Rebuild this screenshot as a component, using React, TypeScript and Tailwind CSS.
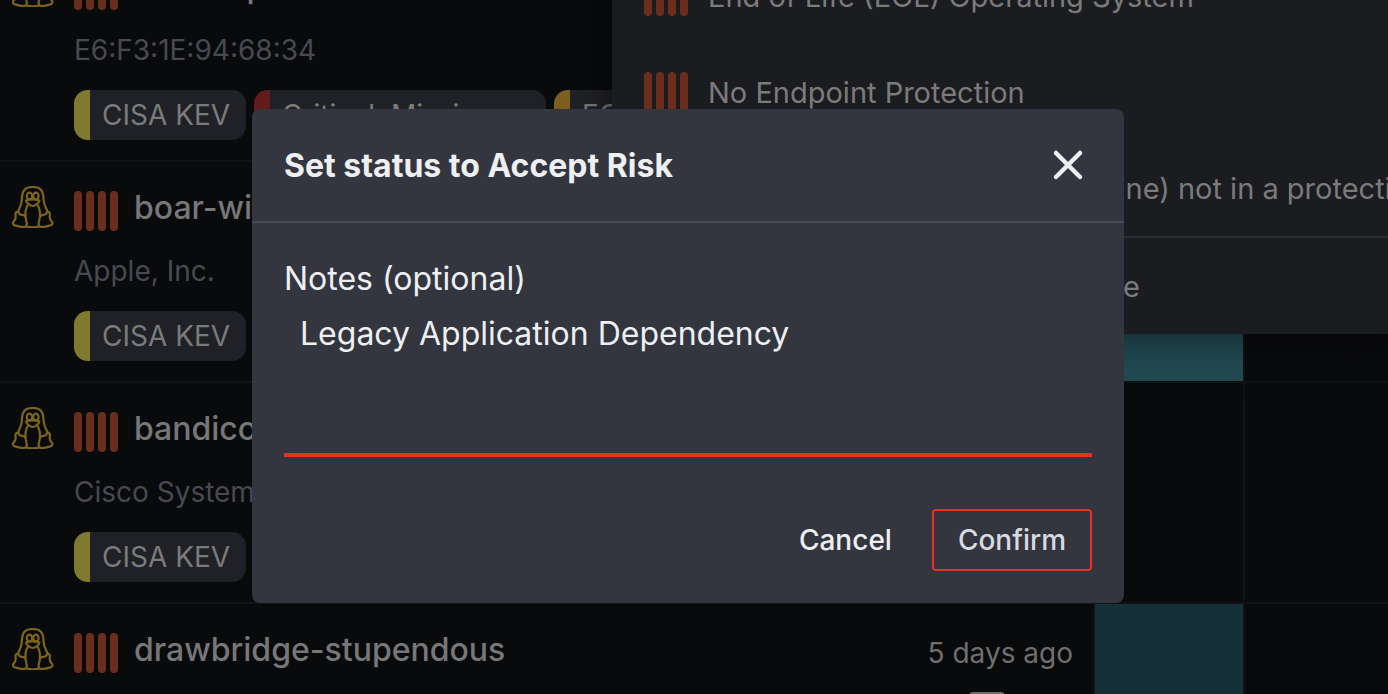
import React, { useState } from 'react';
import { X } from 'lucide-react';

type Tag = { label: string; color: string; width?: string };

type Asset = {
  name: string;
  detail: string;
  lastSeen: string;
  tags: Tag[];
  heat: string;
};

const kev: Tag = { label: 'CISA KEV', color: 'bg-[#817930]' };

const assets: Asset[] = [
  {
    name: 'tenrec-patient',
    detail: 'E6:F3:1E:94:68:34',
    lastSeen: '2 days ago',
    tags: [
      kev,
      { label: 'Critical, Missing ...', color: 'bg-[#641b1b]', width: 'w-[292px]' },
      { label: 'EOL', color: 'bg-[#7d5f20]' },
    ],
    heat: '',
  },
  { name: 'boar-winning', detail: 'Apple, Inc.', lastSeen: '3 days ago', tags: [kev], heat: 'bg-[#224a52]' },
  { name: 'bandicoot-bold', detail: 'Cisco Systems', lastSeen: '4 days ago', tags: [kev], heat: '' },
  { name: 'drawbridge-stupendous', detail: 'Dell Inc.', lastSeen: '5 days ago', tags: [kev], heat: 'bg-[#153036]' },
];

const risks = [
  'End of Life (EOL) Operating System',
  'No Endpoint Protection',
  'Agent (such as a Virtual machine) not in a protection group',
];

function LinuxIcon() {
  return (
    <svg
      viewBox="0 0 42 42"
      className="mt-6 size-[42px] shrink-0 text-[#7d6420]"
      fill="none"
      stroke="currentColor"
      strokeWidth="2.2"
      strokeLinecap="round"
      strokeLinejoin="round"
      aria-label="Linux"
    >
      <path d="M6 26C7 22 9.400 20 9.800 14C10 7 11 1 20.700 1S31.400 7 31.600 14C32 20 34.400 22 35.700 26" />
      <ellipse cx="17.500" cy="10" rx="2.700" ry="3.300" />
      <ellipse cx="23.900" cy="10" rx="2.700" ry="3.300" />
      <path d="M14 14.500C17 13 24 13 27.400 14.500C27 17 23 20 20.700 20S14.400 17 14 14.500Z" />
      <path d="M15.500 19.500C14 22 13.200 25 13.500 30" />
      <path d="M25.900 19.500C27.400 22 28.200 25 27.900 30" />
      <path d="M6 26C4 25.500 3.200 27 3.600 29.500C4 32.500 3.600 33.500 2 35C.4 36.800.6 38.600 2.800 39.400C6 40 8.500 41 11.500 41C14.500 41 15.300 38.500 14.500 36C13.900 33.500 14 31.500 13 30C11.500 28.300 8.800 29.500 7.500 28C6.700 27 7 26.400 6 26Z" />
      <path d="M35.400 26C37.400 25.500 38.200 27 37.800 29.500C37.400 32.500 37.800 33.500 39.400 35C41 36.800 40.800 38.600 38.600 39.400C35.400 40 32.900 41 29.900 41C26.900 41 26.100 38.500 26.900 36C27.500 33.500 27.400 31.500 28.400 30C29.900 28.300 32.600 29.500 33.900 28C34.700 27 34.400 26.400 35.400 26Z" />
      <path d="M14 40.500C18 41.400 23.400 41.400 27.400 40.500" />
    </svg>
  );
}

function SeverityBars() {
  return (
    <div className="flex shrink-0 gap-1">
      {[0, 1, 2, 3].map((i) => (
        <span key={i} className="h-10 w-2 rounded-full bg-[#6b2d1c]" />
      ))}
    </div>
  );
}

function AssetRow({ asset }: { asset: Asset }) {
  return (
    <tr className="align-top">
      <td className="border-b-2 border-[#111214] pb-5 pl-3">
        <div className="flex gap-5">
          <LinuxIcon />
          <div className="pt-[29px] whitespace-nowrap">
            <div className="flex items-start gap-4">
              <SeverityBars />
              <span className="text-[32px] leading-[34px] font-medium text-[#777778]">{asset.name}</span>
            </div>
            <p className="mt-6 text-[28px] leading-8 text-[#484951]">{asset.detail}</p>
            <div className="mt-6 flex gap-2">
              {asset.tags.map((tag) => (
                <span
                  key={tag.label}
                  className={`flex h-[50px] items-center overflow-hidden rounded-[14px] bg-[#202126] pr-4 text-[28px] text-[#7b7b7b] ${tag.width ?? ''}`}
                >
                  <span className={`mr-3 h-full w-4 ${tag.color}`} />
                  {tag.label}
                </span>
              ))}
            </div>
          </div>
        </div>
      </td>
      <td className="border-r-2 border-b-2 border-[#111214] pt-[29px] pr-5 text-right text-[28px] leading-10 whitespace-nowrap text-[#6f6f70]">
        {asset.lastSeen}
        <span className="mt-[19px] mr-[68px] ml-auto block h-6 w-9 rounded bg-[#6f6b68]" />
      </td>
      <td className={`border-r-2 border-b-2 border-[#111214] ${asset.heat}`} />
      <td className="border-b-2 border-[#111214]" />
    </tr>
  );
}

function RiskMenu() {
  return (
    <div className="absolute top-0 right-0 left-[612px] -mt-[52px] overflow-hidden bg-[#1b1c1f] text-[29px] whitespace-nowrap text-[#7b7b7b] shadow-[0_0_40px_rgba(0,0,0,0.6)]">
      <ul>
        {risks.map((risk) => (
          <li key={risk} className="flex h-24 items-center gap-5 pl-8">
            <SeverityBars />
            <span className="pt-0.5">{risk}</span>
          </li>
        ))}
      </ul>
      <div className="flex h-[98px] items-center border-t-2 border-[#2c2d32] pt-0.5 pl-8">
        Get every risk finding for this device
      </div>
    </div>
  );
}

export default function App() {
  const [notes, setNotes] = useState('Legacy Application Dependency');
  const [open, setOpen] = useState(true);

  return (
    <div className="relative h-screen overflow-hidden bg-[#090a0c] font-['Inter',sans-serif]">
      <table className="-mt-[59px] w-full table-fixed border-separate border-spacing-0">
        <colgroup>
          <col />
          <col className="w-[180px]" />
          <col className="w-[150px]" />
          <col className="w-[143px]" />
        </colgroup>
        <tbody>
          {assets.map((asset) => (
            <AssetRow key={asset.name} asset={asset} />
          ))}
        </tbody>
      </table>

      <RiskMenu />

      {open && (
        <div className="fixed inset-0 flex items-start justify-center pt-[109px] pr-3">
          <div
            role="dialog"
            aria-modal="true"
            aria-labelledby="dialog-title"
            className="w-[872px] max-w-full rounded-lg bg-[#33353f] text-[#eeeff1]"
          >
            <div className="flex h-[114px] items-center justify-between border-b-2 border-[#484a57] px-8">
              <h2 id="dialog-title" className="pt-0.5 text-[32px] leading-10 font-bold">
                Set status to Accept Risk
              </h2>
              <button type="button" aria-label="Close" onClick={() => setOpen(false)}>
                <X className="size-12" strokeWidth={2.25} />
              </button>
            </div>
            <form className="px-8 pt-9 pb-8" onSubmit={(e) => e.preventDefault()}>
              <label htmlFor="notes" className="block text-[32px] leading-10">
                Notes (optional)
              </label>
              <textarea
                id="notes"
                value={notes}
                onChange={(e) => setNotes(e.target.value)}
                className="block h-[158px] w-full resize-none border-b-4 border-[#e93223] px-4 pt-[15px] text-[32px] leading-10 outline-none"
              />
              <div className="mt-[52px] flex justify-end gap-4 text-[28px] font-medium">
                <button type="button" className="h-[62px] px-6" onClick={() => setOpen(false)}>
                  Cancel
                </button>
                <button
                  type="submit"
                  className="h-[62px] rounded border-2 border-[#e93223] px-6 text-[#d9dae0]"
                >
                  Confirm
                </button>
              </div>
            </form>
          </div>
        </div>
      )}
    </div>
  );
}
